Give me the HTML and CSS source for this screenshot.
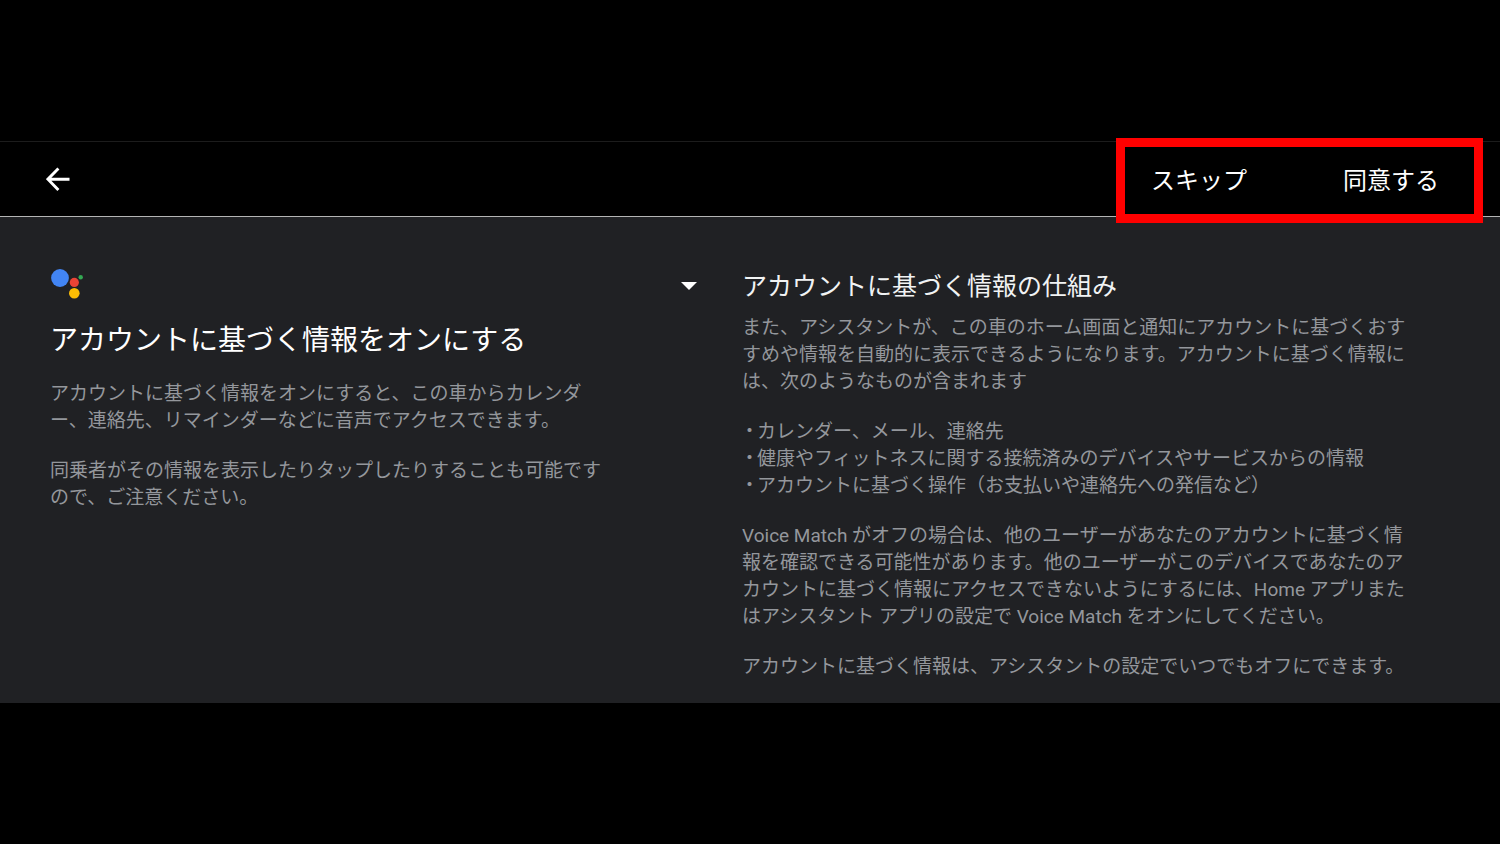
FILE: index.html
```html
<!DOCTYPE html>
<html lang="ja">
<head>
<meta charset="utf-8">
<meta name="viewport" content="width=device-width, initial-scale=1">
<title>アカウントに基づく情報をオンにする</title>
<link rel="stylesheet" href="styles.css">
</head>
<body>
<div class="screen">
  <header class="toolbar">
    <button class="back" type="button" aria-label="戻る">
      <svg width="24" height="24" viewBox="0 0 24 24" fill="none" stroke="#fff" stroke-width="2.9"><path d="M23.5 12.2H2.2M12.4 1.5 1.9 12.2l10.5 10.7"/></svg>
    </button>
    <div class="actions">
      <button class="action" type="button">スキップ</button>
      <button class="action" type="button">同意する</button>
    </div>
  </header>
  <main class="content">
    <section class="intro">
      <svg class="logo" width="34" height="32" viewBox="0 0 34 32" aria-hidden="true">
        <circle cx="10" cy="11" r="8.9" fill="#4285f4"/>
        <circle cx="24.3" cy="15.4" r="4.6" fill="#ea4335"/>
        <circle cx="30.7" cy="10.3" r="2.2" fill="#34a853"/>
        <circle cx="24.3" cy="26.2" r="5.3" fill="#fbbc04"/>
      </svg>
      <h1 class="title">アカウントに基づく情報をオンにする</h1>
      <div class="copy">
        <p>アカウントに基づく情報をオンにすると、この車からカレンダ<br>ー、連絡先、リマインダーなどに音声でアクセスできます。</p>
        <p>同乗者がその情報を表示したりタップしたりすることも可能です<br>ので、ご注意ください。</p>
      </div>
    </section>
    <section class="details">
      <button class="toggle" type="button" aria-label="詳細を閉じる" aria-expanded="true">
        <svg width="16" height="8" viewBox="0 0 16 8"><path d="M0 0h16L8 8z" fill="#fff"/></svg>
      </button>
      <div class="details-body">
        <h2 class="subtitle">アカウントに基づく情報の仕組み</h2>
        <div class="copy">
          <p>また、アシスタントが、この車のホーム画面と通知にアカウントに基づくおす<br>すめや情報を自動的に表示できるようになります。アカウントに基づく情報に<br>は、次のようなものが含まれます</p>
          <ul class="list">
            <li><span class="dot">・</span>カレンダー、メール、連絡先</li>
            <li><span class="dot">・</span>健康やフィットネスに関する接続済みのデバイスやサービスからの情報</li>
            <li><span class="dot">・</span>アカウントに基づく操作（お支払いや連絡先への発信など）</li>
          </ul>
          <p>Voice Match がオフの場合は、他のユーザーがあなたのアカウントに基づく情<br>報を確認できる可能性があります。他のユーザーがこのデバイスであなたのア<br>カウントに基づく情報にアクセスできないようにするには、Home アプリまた<br>はアシスタント アプリの設定で Voice Match をオンにしてください。</p>
          <p>アカウントに基づく情報は、アシスタントの設定でいつでもオフにできます。</p>
        </div>
      </div>
    </section>
  </main>
</div>
</body>
</html>
```
FILE: styles.css
```css
* {
  box-sizing: border-box;
}

body {
  margin: 0;
  min-height: 100vh;
  display: flex;
  flex-direction: column;
  justify-content: center;
  background: #000;
  color: #fff;
  font-family: Roboto, "Noto Sans CJK JP", sans-serif;
}

h1, h2, p, ul {
  margin: 0;
  padding: 0;
  font-weight: 400;
}

button {
  padding: 0;
  border: 0;
  background: none;
  color: inherit;
  font: inherit;
  cursor: pointer;
}

svg {
  display: block;
}

.toolbar {
  display: flex;
  align-items: center;
  justify-content: space-between;
  height: 76px;
  padding: 0 61px 0 46px;
  border-top: 1px solid #1c1c1c;
  border-bottom: 1px solid #b4b4b4;
}

.actions {
  position: relative;
  display: flex;
  gap: 96px;
}

/* Red frame drawn around both actions, over the toolbar edges */
.actions::after {
  content: "";
  position: absolute;
  inset: -22px -44px -24px -35px;
  border: 9px solid #f00;
  pointer-events: none;
}

.action {
  padding-top: 4px;
  font-size: 24px;
  line-height: 35px;
}

.content {
  display: grid;
  grid-template-columns: 631fr 819fr;
  padding: 50px 0 23px 50px;
  background: #202124;
}

.title {
  margin-top: 22px;
  font-size: 28px;
  line-height: 40px;
}

.subtitle {
  font-size: 25px;
  line-height: 40px;
  color: #f1f3f4;
}

.copy {
  display: flex;
  flex-direction: column;
  gap: 23px;
  font-size: 19px;
  line-height: 27px;
  color: #94979c;
}

.intro .copy {
  margin-top: 19px;
}

.details {
  display: flex;
  align-items: flex-start;
  gap: 45px;
}

.toggle {
  padding: 15px 0;
}

.details-body {
  flex: 1;
}

.details .copy {
  margin-top: 7px;
}

.list {
  list-style: none;
}

.list li {
  display: flex;
}

.dot {
  display: flex;
  justify-content: center;
  width: 15px;
}
```
